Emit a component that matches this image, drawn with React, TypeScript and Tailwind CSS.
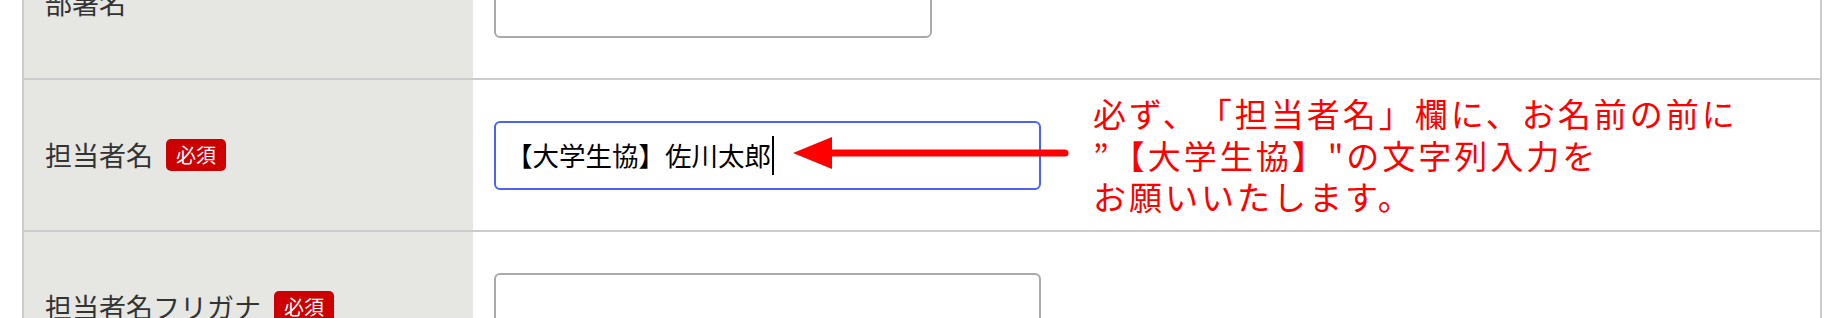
import React from 'react';

function Badge() {
  return (
    <span className="inline-flex h-[32px] items-center rounded-[5px] bg-[#cc0000] px-[10px] text-[20px] leading-none text-white">
      必須
    </span>
  );
}

interface RowProps {
  label: string;
  required?: boolean;
  children: React.ReactNode;
}

function Row({ label, required, children }: RowProps) {
  return (
    <div className="flex h-[152px] border-b-2 border-[#cccccc]">
      <div className="flex w-[449px] shrink-0 items-center gap-[13px] bg-[#e6e6e2] pl-[21px] text-[27px] text-[#333333]">
        <span>{label}</span>
        {required && <Badge />}
      </div>
      <div className="relative flex flex-1 items-center pl-[21px]">{children}</div>
    </div>
  );
}

export default function App() {
  return (
    <div className="h-[318px] w-[1840px] overflow-hidden bg-white font-['Noto_Sans_CJK_JP',sans-serif]">
      <div className="-mt-[72px] ml-[22px] w-[1800px] border-x-2 border-[#cccccc]">
        <Row label="部署名">
          <div className="h-[69px] w-[438px] rounded-[6px] border-2 border-[#aaaaaa] bg-white" />
        </Row>

        <Row label="担当者名" required>
          <div className="flex h-[69px] w-[547px] items-center rounded-[6px] border-2 border-[#4a63f5] bg-white pl-[10px] text-[26.5px] text-black">
            <span>【大学生協】佐川太郎</span>
            <span className="ml-[1px] h-[39px] w-[2px] bg-black" />
          </div>

          {/* annotation arrow */}
          <svg
            className="absolute left-[320px] top-[57px]"
            width="276"
            height="32"
            viewBox="0 0 276 32"
          >
            <polygon points="0,16 39,0 39,32" fill="#ff0000" />
            <line x1="30" y1="16" x2="272" y2="16" stroke="#ff0000" strokeWidth="7" strokeLinecap="round" />
          </svg>

          <div className="absolute left-[620px] top-[13px] text-[33px] leading-[41.5px] tracking-[3px] text-[#ff0000] [text-spacing-trim:space-all]">
            <div>必ず、「担当者名」欄に、お名前の前に</div>
            <div>”【大学生協】"の文字列入力を</div>
            <div>お願いいたします。</div>
          </div>
        </Row>

        <Row label="担当者名フリガナ" required>
          <div className="h-[69px] w-[547px] rounded-[6px] border-2 border-[#aaaaaa] bg-white" />
        </Row>
      </div>
    </div>
  );
}
